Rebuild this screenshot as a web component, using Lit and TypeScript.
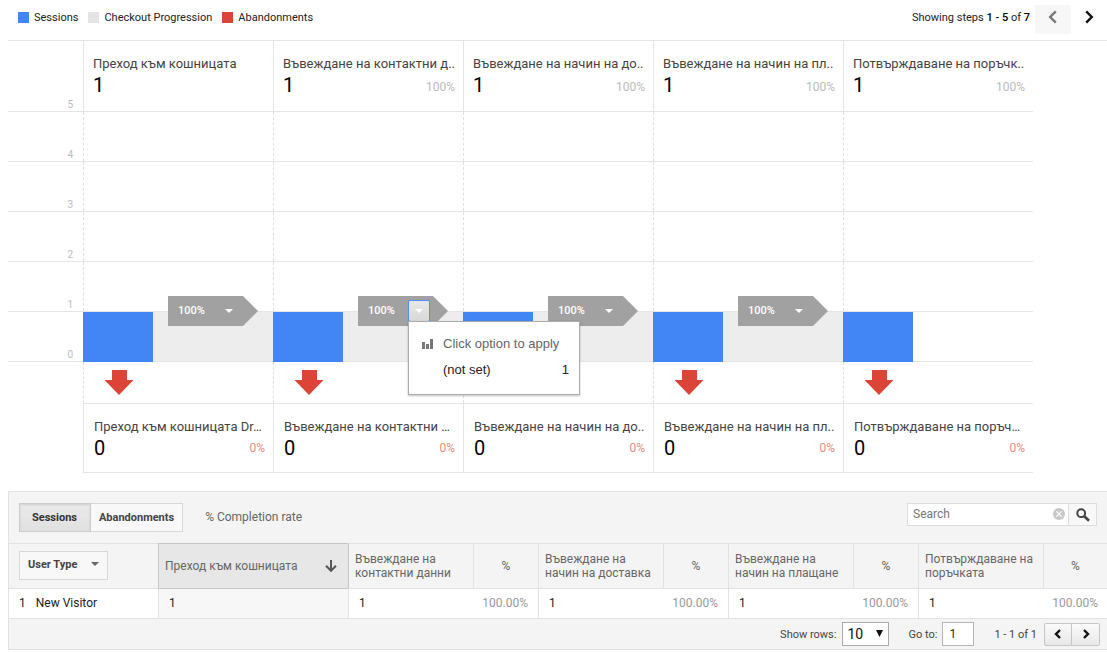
import { LitElement, html, css, svg, nothing } from "lit";
import { customElement, property } from "lit/decorators.js";

interface Step {
  title: string;
  dropTitle: string;
  column: string;
  sessions: number;
  share: string;
  menuOpen?: boolean;
}

const STEPS: Step[] = [
  { title: "Преход към кошницата", dropTitle: "Преход към кошницата Dr…", column: "Преход към кошницата", sessions: 1, share: "" },
  { title: "Въвеждане на контактни д..", dropTitle: "Въвеждане на контактни …", column: "Въвеждане на контактни данни", sessions: 1, share: "100%", menuOpen: true },
  { title: "Въвеждане на начин на до..", dropTitle: "Въвеждане на начин на до..", column: "Въвеждане на начин на доставка", sessions: 1, share: "100%" },
  { title: "Въвеждане на начин на пл..", dropTitle: "Въвеждане на начин на пл..", column: "Въвеждане на начин на плащане", sessions: 1, share: "100%" },
  { title: "Потвърждаване на поръчк..", dropTitle: "Потвърждаване на поръч…", column: "Потвърждаване на поръчката", sessions: 1, share: "100%" },
];

const chevron = (direction: "left" | "right", size: number) => html`
  <svg width=${size} height=${size} viewBox="0 0 14 14" fill="none" stroke="currentColor" stroke-width=${size < 12 ? 3.4 : 2.4} aria-hidden="true">
    ${direction === "left" ? svg`<path d="M9.8 1.4 4.2 7l5.6 5.6" />` : svg`<path d="M4.2 1.4 9.8 7l-5.6 5.6" />`}
  </svg>
`;

@customElement("flow-tag")
export class FlowTag extends LitElement {
  @property({ type: Boolean }) open = false;

  static styles = css`
    :host {
      display: block;
      width: 90px;
      height: 30px;
    }
    .tag {
      position: relative;
      display: flex;
      align-items: flex-start;
      height: 30px;
      color: #fff;
      font-size: 11px;
      line-height: 29px;
    }
    .tag::before {
      content: "";
      position: absolute;
      inset: 0;
      background: #a2a1a2;
      clip-path: polygon(0 0, 75px 0, 100% 50%, 75px 100%, 0 100%);
    }
    .value {
      position: relative;
      box-sizing: border-box;
      width: 50px;
      padding-left: 10px;
      font-weight: 500;
    }
    .toggle {
      position: relative;
      box-sizing: border-box;
      display: flex;
      align-items: center;
      justify-content: center;
      width: 22px;
      height: 22px;
      margin: 4px 0 0;
      padding: 0;
      border: 1px solid transparent;
      border-radius: 2px;
      background: none;
      color: #fff;
    }
    .toggle.open {
      border-color: #4d90fe;
      background: linear-gradient(#e8e8e8, #d8d8d8);
    }
    .menu {
      position: absolute;
      left: 50px;
      top: 25px;
      box-sizing: border-box;
      display: grid;
      grid-template-columns: 11px 1fr auto;
      align-content: start;
      column-gap: 10px;
      row-gap: 6px;
      width: 172px;
      height: 74px;
      padding: 12px 10px 0 13px;
      border: 1px solid #acacac;
      background: #fff;
      box-shadow: 0 1px 2px rgba(0, 0, 0, 0.25);
      color: #222;
      font-family: "Liberation Sans", Arial, sans-serif;
      font-size: 13px;
      line-height: 20px;
    }
    .hint {
      grid-column: 2 / 4;
      color: #666;
    }
    .bars {
      align-self: center;
    }
    .option {
      grid-column: 2;
    }
  `;

  render() {
    return html`
      <div class="tag">
        <span class="value">100%</span>
        <button class="toggle ${this.open ? "open" : ""}" type="button" aria-label="Options" aria-expanded=${this.open}>
          <svg width="8" height="4" viewBox="0 0 8 4" aria-hidden="true"><path d="M0 0h8L4 4z" fill="currentColor" /></svg>
        </button>
        ${this.open
          ? html`<div class="menu">
              <svg class="bars" width="11" height="10" viewBox="0 0 11 10" fill="#777" aria-hidden="true">
                <path d="M0 3h3v7H0zM4 5h3v5H4zM8 0h3v10H8z" />
              </svg>
              <span class="hint">Click option to apply</span>
              <span class="option">(not set)</span>
              <span>1</span>
            </div>`
          : nothing}
      </div>
    `;
  }
}

@customElement("checkout-funnel")
export class CheckoutFunnel extends LitElement {
  static styles = css`
    :host {
      display: block;
    }
    .top {
      display: flex;
      align-items: flex-start;
      justify-content: space-between;
      height: 40px;
      padding-left: 18px;
      font-size: 11px;
      line-height: 36px;
      color: #222;
    }
    .legend,
    .pager {
      display: flex;
      align-items: center;
    }
    .legend {
      gap: 10px;
    }
    .key {
      display: flex;
      align-items: center;
      gap: 5px;
    }
    .swatch {
      width: 11px;
      height: 11px;
      margin-bottom: 2px;
    }
    .blue {
      background: #4285f4;
    }
    .grey {
      background: #e4e4e4;
    }
    .red {
      background: #db4437;
    }
    .pager {
      align-items: flex-start;
    }
    .pager b {
      font-weight: 500;
      color: #000;
    }
    .pager span {
      margin-right: 5px;
    }
    .page {
      display: flex;
      align-items: center;
      justify-content: center;
      width: 36px;
      height: 29px;
      margin: 5px 0 0;
      padding: 0 0 6px;
      border: 0;
      background: none;
      color: #111;
    }
    .page:disabled {
      background: #f7f7f7;
      color: #777;
    }
    .chart {
      margin-left: 8px;
      padding-right: 74px;
      border-top: 1px solid #e5e5e5;
    }
    .row {
      display: grid;
      grid-template-columns: 75px repeat(5, minmax(0, 1fr));
    }
    .line {
      border-bottom: 1px solid #e5e5e5;
    }
    .axis {
      display: flex;
      align-items: flex-end;
      justify-content: flex-end;
      padding-right: 10px;
      color: #bbb;
      font-size: 10px;
      line-height: 12px;
    }
    .card {
      box-sizing: border-box;
      padding: 14px 8px 0 9px;
      border-left: 1px solid #e5e5e5;
      overflow: hidden;
    }
    .head .card {
      height: 70px;
    }
    .title {
      margin: 0;
      color: #444;
      font-size: 13px;
      font-weight: 400;
      line-height: 18px;
      white-space: nowrap;
    }
    .figures {
      display: flex;
      align-items: flex-start;
      justify-content: space-between;
      line-height: 24px;
    }
    .count {
      color: #000;
      font-size: 20px;
    }
    .share {
      color: #bbb;
      font-size: 12px;
    }
    .head .share {
      padding-top: 2px;
    }
    .band {
      height: 49px;
    }
    .guide {
      border-left: 1px dashed #e0e0e0;
    }
    .flow {
      display: flex;
      height: 49px;
    }
    .bar {
      width: 70px;
      height: 50px;
      background: #4285f4;
    }
    .progress {
      position: relative;
      flex: 1;
      background: #ededee;
    }
    .progress flow-tag {
      position: absolute;
      left: 15px;
      top: -16px;
      z-index: 1;
    }
    .progress flow-tag[open] {
      z-index: 2;
    }
    .exits {
      height: 41px;
    }
    .exit {
      padding: 8px 0 0 20px;
    }
    .exit svg {
      display: block;
    }
    .drops .card {
      height: 70px;
      padding-left: 10px;
      border-top: 1px solid #e5e5e5;
      border-bottom: 1px solid #e5e5e5;
    }
    .drops .share {
      color: #e98b82;
    }
  `;

  render() {
    return html`
      <div class="top">
        <div class="legend">
          <span class="key"><i class="swatch blue"></i>Sessions</span>
          <span class="key"><i class="swatch grey"></i>Checkout Progression</span>
          <span class="key"><i class="swatch red"></i>Abandonments</span>
        </div>
        <div class="pager">
          <span>Showing steps <b>1 - 5</b> of <b>7</b></span>
          <button class="page" type="button" disabled aria-label="Previous steps">${chevron("left", 14)}</button>
          <button class="page" type="button" aria-label="Next steps">${chevron("right", 14)}</button>
        </div>
      </div>
      <div class="chart">
        <div class="row head line">
          <div class="axis">5</div>
          ${STEPS.map(
            (s) => html`<div class="card">
              <h3 class="title">${s.title}</h3>
              <div class="figures"><span class="count">${s.sessions}</span><span class="share">${s.share}</span></div>
            </div>`
          )}
        </div>
        ${[4, 3, 2, 1].map(
          (n) => html`<div class="row band line">
            <div class="axis">${n}</div>
            ${STEPS.map(() => html`<div class="guide"></div>`)}
          </div>`
        )}
        <div class="row band line">
          <div class="axis">0</div>
          ${STEPS.map(
            (s, i) => html`<div class="flow">
              <div class="bar"></div>
              ${i < STEPS.length - 1
                ? html`<div class="progress"><flow-tag ?open=${s.menuOpen}></flow-tag></div>`
                : nothing}
            </div>`
          )}
        </div>
        <div class="row exits">
          <div></div>
          ${STEPS.map(
            () => html`<div class="guide exit">
              <svg width="30" height="25" viewBox="0 0 30 25" aria-hidden="true">
                <path d="M8 0h15v10h6.500L15 25 .5 10H8z" fill="#db4437" />
              </svg>
            </div>`
          )}
        </div>
        <div class="row drops">
          <div></div>
          ${STEPS.map(
            (s) => html`<div class="card">
              <h3 class="title">${s.dropTitle}</h3>
              <div class="figures"><span class="count">0</span><span class="share">0%</span></div>
            </div>`
          )}
        </div>
      </div>
    `;
  }
}

@customElement("steps-table")
export class StepsTable extends LitElement {
  static styles = css`
    :host {
      display: block;
      margin-left: 8px;
      border: 1px solid #e2e2e2;
      border-right: 0;
      background: #f5f4f5;
      color: #222;
      font-size: 12px;
    }
    button,
    input,
    select {
      box-sizing: border-box;
      margin: 0;
      font-family: inherit;
      border-radius: 0;
    }
    .toolbar {
      display: flex;
      align-items: flex-start;
      height: 40px;
      padding: 11px 10px 0 10px;
    }
    .tab {
      height: 29px;
      padding: 0 8px;
      border: 1px solid #d8d8d8;
      border-left: 0;
      background: #f8f8f8;
      color: #444;
      font-size: 11px;
      font-weight: 700;
    }
    .tab.on {
      padding: 0 13px 0 12px;
      border: 1px solid #ccc;
      background: linear-gradient(#eaeaea, #e0e0e0);
      box-shadow: inset 0 1px 2px rgba(0, 0, 0, 0.12);
      color: #333;
    }
    .rate {
      margin-left: 22px;
      color: #666;
      line-height: 28px;
    }
    .search {
      display: flex;
      width: 190px;
      margin-left: auto;
    }
    .field {
      position: relative;
      flex: 1;
      display: flex;
    }
    .field input {
      width: 100%;
      height: 23px;
      padding: 0 24px 2px 5px;
      border: 1px solid #ddd;
      background: #fff;
      font-size: 12px;
    }
    .field input::placeholder {
      color: #777;
      opacity: 1;
    }
    .clear {
      position: absolute;
      right: 4px;
      top: 5px;
      display: flex;
      padding: 0;
      border: 0;
      background: none;
    }
    .go {
      display: flex;
      align-items: center;
      justify-content: center;
      width: 28px;
      height: 23px;
      padding: 0;
      border: 1px solid #ddd;
      border-left: 0;
      background: #f8f8f8;
    }
    table {
      width: 100%;
      table-layout: fixed;
      border-collapse: separate;
      border-spacing: 0;
    }
    .c-type {
      width: 149px;
    }
    .c-first {
      width: 190px;
    }
    .c-step {
      width: 125px;
    }
    .c-share {
      width: 65px;
    }
    th {
      box-sizing: border-box;
      height: 45px;
      padding: 0 6px;
      border-top: 1px solid #e2e2e2;
      border-left: 1px solid #e2e2e2;
      color: #666;
      font-weight: 400;
      line-height: 14px;
      text-align: left;
    }
    th.type {
      padding: 0 10px 2px;
      border-left: 0;
    }
    th.sorted {
      border-top-color: #c6c6c6;
      border-left-color: #c6c6c6;
      background: #e8e7e8;
    }
    th.sorted + th {
      border-left-color: #c6c6c6;
    }
    th.pct {
      text-align: center;
    }
    .sort {
      display: flex;
      align-items: center;
      justify-content: space-between;
      padding-right: 5px;
    }
    .menu {
      display: flex;
      align-items: center;
      gap: 14px;
      height: 29px;
      padding: 0 8px 2px;
      border: 1px solid #d8d8d8;
      background: #f8f8f8;
      color: #444;
      font-size: 11px;
      font-weight: 700;
    }
    td {
      box-sizing: border-box;
      height: 31px;
      padding: 0 10px 2px;
      border-top: 1px solid #e2e2e2;
      border-bottom: 1px solid #e2e2e2;
      background: #fff;
      line-height: 16px;
    }
    td.cell {
      border-left: 1px solid #e2e2e2;
    }
    td.first {
      border-top-color: #c6c6c6;
      background: #f8f7f8;
    }
    td.pct {
      padding-left: 0;
      color: #999;
      text-align: right;
    }
    td.pct:last-child {
      padding-right: 9px;
    }
    .index {
      margin-right: 10px;
    }
    .footer {
      display: flex;
      align-items: center;
      justify-content: flex-end;
      height: 30px;
      padding-right: 7px;
      font-size: 11px;
      color: #444;
    }
    .rows {
      position: relative;
      display: flex;
      margin: 0 19px 0 6px;
    }
    .rows select {
      width: 47px;
      height: 24px;
      padding: 0 4px;
      border: 1px solid #aaa;
      background: #fff;
      color: #111;
      font-size: 14px;
      appearance: none;
    }
    .rows svg {
      position: absolute;
      right: 6px;
      top: 8px;
      pointer-events: none;
    }
    .goto {
      width: 32px;
      height: 24px;
      margin: 0 20px 0 5px;
      padding: 0 6px;
      border: 1px solid #b5b5b5;
      background: #fff;
      color: #222;
      font-size: 12px;
    }
    .step {
      display: flex;
      align-items: center;
      justify-content: center;
      width: 28px;
      height: 23px;
      padding: 0;
      border: 1px solid #c6c6c6;
      background: linear-gradient(#fafafa, #e8e8e8);
      color: #111;
    }
    .step.prev {
      margin-left: 7px;
      border-radius: 2px 0 0 2px;
    }
    .step.next {
      border-left: 0;
      border-radius: 0 2px 2px 0;
    }
  `;

  render() {
    const rest = STEPS.slice(1);
    return html`
      <div class="toolbar">
        <button class="tab on" type="button">Sessions</button>
        <button class="tab" type="button">Abandonments</button>
        <span class="rate">% Completion rate</span>
        <div class="search">
          <div class="field">
            <input type="text" placeholder="Search" aria-label="Search" />
            <button class="clear" type="button" aria-label="Clear">
              <svg width="12" height="12" viewBox="0 0 12 12" aria-hidden="true">
                <circle cx="6" cy="6" r="6" fill="#c8c8c8" />
                <path d="M3.400 3.400l5.200 5.200M8.600 3.400l-5.200 5.200" stroke="#fff" stroke-width="1.300" />
              </svg>
            </button>
          </div>
          <button class="go" type="button" aria-label="Run search">
            <svg width="14" height="14" viewBox="0 0 14 14" fill="none" stroke="#444" aria-hidden="true">
              <circle cx="5.200" cy="5.200" r="3.900" stroke-width="2" />
              <path d="M8 8l5 4.800" stroke-width="2.600" />
            </svg>
          </button>
        </div>
      </div>
      <table>
        <colgroup>
          <col class="c-type" />
          <col class="c-first" />
          ${rest.map((_, i) => html`<col class="c-step" />${i < rest.length - 1 ? html`<col class="c-share" />` : html`<col />`}`)}
        </colgroup>
        <thead>
          <tr>
            <th class="type">
              <button class="menu" type="button">
                User Type
                <svg width="8" height="4" viewBox="0 0 8 4" aria-hidden="true"><path d="M0 0h8L4 4z" fill="#666" /></svg>
              </button>
            </th>
            <th class="sorted">
              <div class="sort">
                ${STEPS[0].column}
                <svg width="12" height="12" viewBox="0 0 12 12" fill="none" stroke="#555" stroke-width="2" aria-hidden="true">
                  <path d="M6 0v10.500M1 5.800l5 5 5-5" />
                </svg>
              </div>
            </th>
            ${rest.map((s) => html`<th>${s.column}</th><th class="pct">%</th>`)}
          </tr>
        </thead>
        <tbody>
          <tr>
            <td><span class="index">1</span>New Visitor</td>
            <td class="cell first">${STEPS[0].sessions}</td>
            ${rest.map((s) => html`<td class="cell">${s.sessions}</td><td class="pct">100.00%</td>`)}
          </tr>
        </tbody>
      </table>
      <div class="footer">
        <label for="rows">Show rows:</label>
        <div class="rows">
          <select id="rows">
            <option>10</option>
            <option>25</option>
          </select>
          <svg width="7" height="7" viewBox="0 0 7 7" aria-hidden="true"><path d="M0 0h7L3.500 7z" fill="#111" /></svg>
        </div>
        <label for="goto">Go to:</label>
        <input class="goto" id="goto" type="text" .value=${"1"} />
        <span>1 - 1 of 1</span>
        <button class="step prev" type="button" aria-label="Previous page">${chevron("left", 10)}</button>
        <button class="step next" type="button" aria-label="Next page">${chevron("right", 10)}</button>
      </div>
    `;
  }
}

@customElement("app-root")
export class AppRoot extends LitElement {
  static styles = css`
    :host {
      display: block;
      background: #fff;
      font-family: Roboto, "Liberation Sans", sans-serif;
      overflow: hidden;
    }
    steps-table {
      margin-top: 18px;
    }
  `;

  render() {
    return html`
      <checkout-funnel></checkout-funnel>
      <steps-table></steps-table>
    `;
  }
}
